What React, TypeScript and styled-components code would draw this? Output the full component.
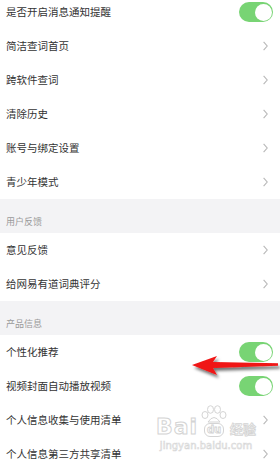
import React from "react";
import styled, { createGlobalStyle } from "styled-components";

const GlobalStyle = createGlobalStyle`
  html, body { margin: 0; padding: 0; background: #ffffff; }
  body { font-family: "Noto Sans CJK SC", "Noto Sans", sans-serif; }
  * { box-sizing: border-box; }
`;

const Page = styled.div`
  position: relative;
  width: 280px;
  height: 470px;
  overflow: hidden;
  background: #ffffff;
`;

const List = styled.div`
  display: flex;
  flex-direction: column;
  margin-top: -5px;
`;

const Row = styled.div`
  height: 34px;
  display: flex;
  align-items: center;
  justify-content: space-between;
  padding: 0 6px;
  background: #ffffff;
`;

const Label = styled.span`
  font-size: 10.5px;
  color: #333333;
  line-height: 1;
  font-weight: 400;
`;

const Section = styled.div`
  height: 34px;
  display: flex;
  align-items: center;
  padding: 10px 6px 0;
  background: #f3f3f5;
`;

const SectionLabel = styled.span`
  font-size: 9px;
  color: #9a9a9a;
  line-height: 1;
`;

const ChevronWrap = styled.span`
  display: flex;
  width: 8px;
  justify-content: center;
  margin-right: 5px;
`;

const Toggle = styled.span<{ $on: boolean }>`
  position: relative;
  width: 34px;
  height: 20px;
  border-radius: 10px;
  background: ${(p) => (p.$on ? "#78d474" : "#e5e5e5")};
  margin-right: 1px;
  &::after {
    content: "";
    position: absolute;
    top: 1.5px;
    ${(p) => (p.$on ? "right: 1.5px;" : "left: 1.5px;")}
    width: 17px;
    height: 17px;
    border-radius: 50%;
    background: #ffffff;
  }
`;

const ArrowSvg = styled.svg`
  position: absolute;
  left: 186px;
  top: 350px;
  width: 94px;
  height: 32px;
`;

const Watermark = styled.div`
  position: absolute;
  left: 150px;
  top: 405px;
  width: 112px;
  display: flex;
  flex-direction: column;
  align-items: center;
  pointer-events: none;
`;

const MarkTop = styled.div`
  display: flex;
  align-items: flex-end;
  gap: 2px;
`;

const BaiText = styled.span`
  font-family: "DejaVu Sans", sans-serif;
  font-weight: 700;
  font-size: 22px;
  line-height: 21px;
  color: #ffffff;
  -webkit-text-stroke: 1px #d4d4d4;
  letter-spacing: 1px;
`;

const PawBox = styled.span`
  display: flex;
  flex-direction: column;
  align-items: center;
`;

const DuText = styled.span`
  font-family: "DejaVu Sans", sans-serif;
  font-weight: 700;
  font-size: 10px;
  line-height: 12px;
  padding: 0 2px;
  border: 1px solid #d4d4d4;
  border-radius: 6px;
  color: #ffffff;
  -webkit-text-stroke: 0.8px #d0d0d0;
`;

const JingText = styled.span`
  font-family: "Noto Sans CJK SC", sans-serif;
  font-weight: 700;
  font-size: 13px;
  line-height: 16px;
  color: #ffffff;
  -webkit-text-stroke: 0.8px #d4d4d4;
`;

const UrlText = styled.span`
  font-family: "DejaVu Sans", sans-serif;
  font-size: 10px;
  line-height: 12px;
  margin-top: 3px;
  color: #ffffff;
  -webkit-text-stroke: 0.6px #d6d6d6;
`;

const Chevron = () => (
  <ChevronWrap>
    <svg width="5" height="10" viewBox="0 0 5 10">
      <path d="M0.6 0.8 L4.2 5 L0.6 9.2" fill="none" stroke="#b8b8b8" strokeWidth="1.1" />
    </svg>
  </ChevronWrap>
);

type Item =
  | { kind: "row"; label: string; toggle?: boolean }
  | { kind: "section"; label: string };

const items: Item[] = [
  { kind: "row", label: "是否开启消息通知提醒", toggle: true },
  { kind: "row", label: "简洁查词首页" },
  { kind: "row", label: "跨软件查词" },
  { kind: "row", label: "清除历史" },
  { kind: "row", label: "账号与绑定设置" },
  { kind: "row", label: "青少年模式" },
  { kind: "section", label: "用户反馈" },
  { kind: "row", label: "意见反馈" },
  { kind: "row", label: "给网易有道词典评分" },
  { kind: "section", label: "产品信息" },
  { kind: "row", label: "个性化推荐", toggle: true },
  { kind: "row", label: "视频封面自动播放视频", toggle: true },
  { kind: "row", label: "个人信息收集与使用清单" },
  { kind: "row", label: "个人信息第三方共享清单" },
];

export default function App() {
  return (
    <>
      <GlobalStyle />
      <Page>
        <List>
          {items.map((it, i) =>
            it.kind === "section" ? (
              <Section key={i}>
                <SectionLabel>{it.label}</SectionLabel>
              </Section>
            ) : (
              <Row key={i}>
                <Label>{it.label}</Label>
                {it.toggle ? <Toggle $on /> : <Chevron />}
              </Row>
            )
          )}
        </List>
        <Watermark>
          <MarkTop>
            <BaiText>Bai</BaiText>
            <PawBox>
              <svg width="28" height="18" viewBox="0 0 28 18">
                <g fill="#ffffff" stroke="#d4d4d4" strokeWidth="1">
                  <ellipse cx="5" cy="10" rx="3" ry="3.5" />
                  <ellipse cx="10.5" cy="4.5" rx="3" ry="3.8" />
                  <ellipse cx="17.5" cy="4.5" rx="3" ry="3.8" />
                  <ellipse cx="23" cy="10" rx="3" ry="3.5" />
                  <path d="M8 17 Q14 8 20 17 Z" />
                </g>
              </svg>
              <DuText>du</DuText>
            </PawBox>
            <JingText>经验</JingText>
          </MarkTop>
          <UrlText>jingyan.baidu.com</UrlText>
        </Watermark>
        <ArrowSvg viewBox="0 0 94 32">
          <defs>
            <filter id="sh" x="-20%" y="-50%" width="140%" height="200%">
              <feDropShadow dx="2" dy="3" stdDeviation="1.8" floodColor="#000000" floodOpacity="0.55" />
            </filter>
          </defs>
          <path
            d="M6 15 L31 6 L27 12 L92 13.2 L92 15.8 L27 18 L31 25 Z"
            fill="#f01414"
            filter="url(#sh)"
          />
        </ArrowSvg>
      </Page>
    </>
  );
}
